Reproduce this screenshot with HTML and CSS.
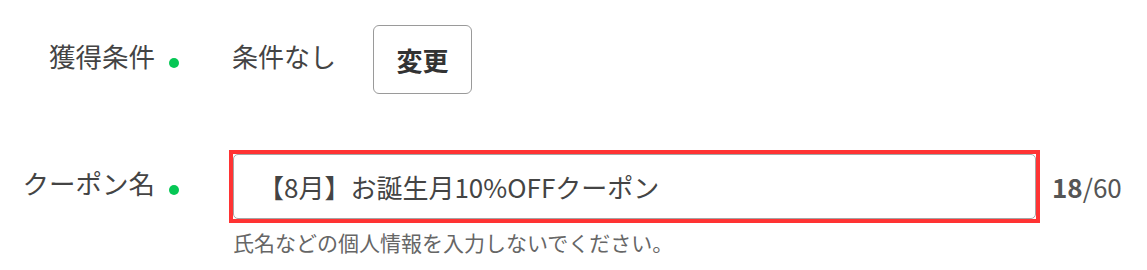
FILE: index.html
```html
<!DOCTYPE html>
<html lang="ja">
<head>
    <meta charset="UTF-8">
    <meta name="viewport" content="width=device-width, initial-scale=1.0">
    <title>クーポン作成</title>
    <link rel="stylesheet" href="styles.css">
</head>
<body>
    <div class="coupon-form">
        <div class="form-row row-condition">
            <div class="form-label">
                <span class="label-text">獲得条件</span>
                <span class="required-dot"></span>
            </div>
            <div class="form-field">
                <span class="condition-text">条件なし</span>
                <button type="button" class="btn-change">変更</button>
            </div>
        </div>

        <div class="form-row row-name">
            <div class="form-label">
                <span class="label-text">クーポン名</span>
                <span class="required-dot"></span>
            </div>
            <div class="form-field">
                <div class="highlight">
                    <input type="text" class="text-input" value="【8月】お誕生月10%OFFクーポン">
                </div>
                <div class="char-count"><strong>18</strong>/60</div>
            </div>
        </div>
        <p class="field-note">氏名などの個人情報を入力しないでください。</p>
    </div>
</body>
</html>
```

FILE: styles.css
```css
* {
    margin: 0;
    padding: 0;
    box-sizing: border-box;
}

body {
    font-family: "Noto Sans CJK JP", "Noto Sans", sans-serif;
    color: #444;
    background: #fff;
}

.coupon-form {
    padding-top: 25px;
}

.form-row {
    display: flex;
    align-items: center;
}

.row-condition {
    height: 69px;
}

.row-name {
    margin-top: 56px;
}

.form-label {
    width: 229px;
    padding-right: 50px;
    display: flex;
    align-items: center;
    justify-content: flex-end;
    font-size: 26.5px;
}

.label-text {
    margin-bottom: 8px;
}

.required-dot {
    width: 10px;
    height: 10px;
    margin-left: 14px;
    margin-top: 6px;
    border-radius: 50%;
    background: #06c755;
}

.form-field {
    display: flex;
    align-items: center;
}

.condition-text {
    font-size: 26px;
    margin-left: 3px;
    margin-bottom: 8px;
}

.btn-change {
    width: 99px;
    height: 69px;
    margin-left: 37px;
    border: 1px solid #9a9a9a;
    border-radius: 6px;
    background: #fff;
    color: #333;
    font-family: inherit;
    font-size: 26px;
    font-weight: bold;
}

.highlight {
    border: 4px solid #ff3333;
}

.text-input {
    display: block;
    width: 803px;
    height: 65px;
    padding: 0 24px;
    border: 1px solid #a5a5a5;
    border-radius: 5px;
    font-family: inherit;
    font-size: 26px;
    color: #444;
    outline: none;
}

.char-count {
    margin-left: 12px;
    font-size: 26px;
    color: #555;
}

.char-count strong {
    font-weight: bold;
}

.field-note {
    margin: 4px 0 0 233px;
    font-size: 21px;
    color: #666;
}
```
